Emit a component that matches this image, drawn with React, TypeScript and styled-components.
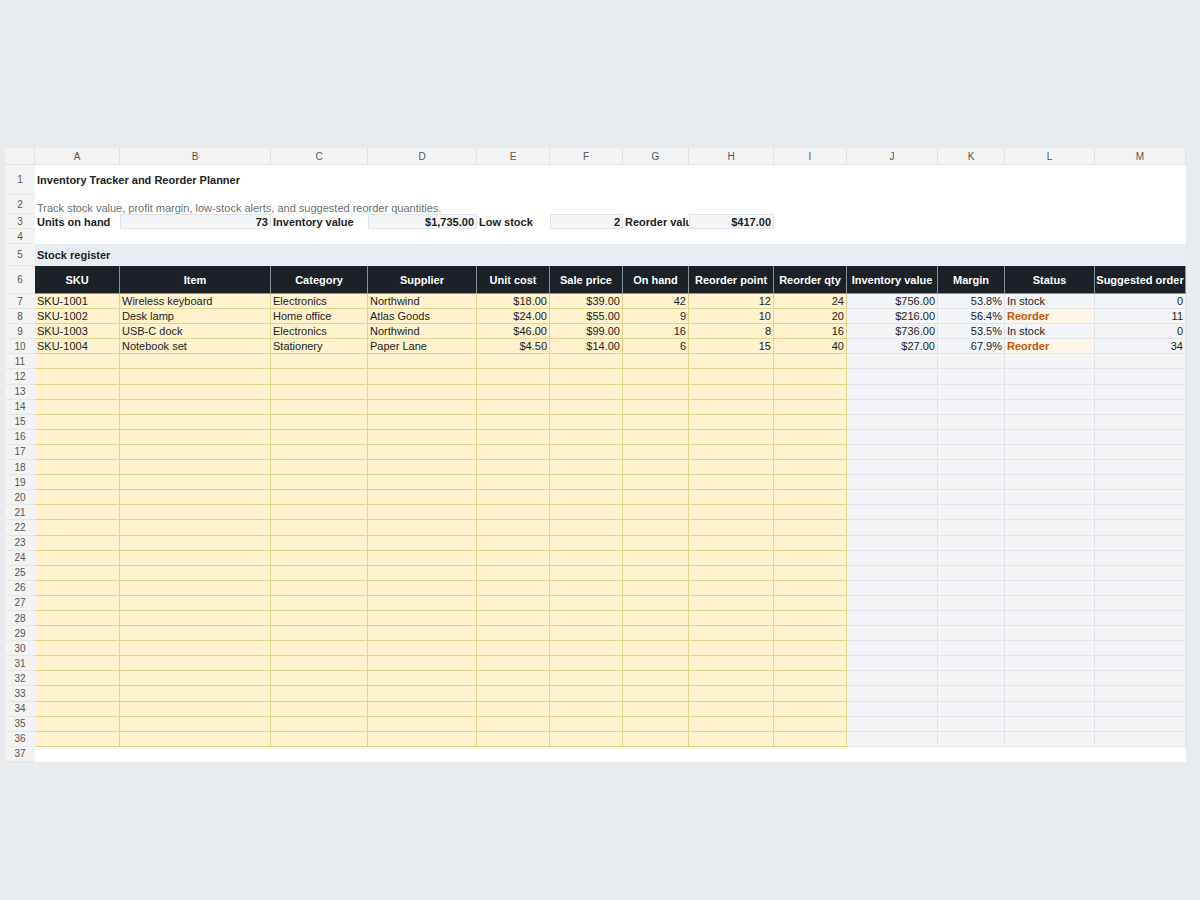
import React from "react";
import styled, { createGlobalStyle, css } from "styled-components";

const Global = createGlobalStyle`
  html, body { margin: 0; background: #e8ecef; font-family: "Liberation Sans", Arial, sans-serif; }
`;

const cols = [85, 151, 97, 109, 73, 73, 66, 85, 73, 91, 67, 90, 91];
const letters = "ABCDEFGHIJKLM".split("");
const rowHeights: Record<number, number> = { 1: 30, 2: 19, 3: 15, 4: 15, 5: 22, 6: 28 };

const Page = styled.div`
  padding: 148px 0 0 5px;
  height: 900px;
  box-sizing: border-box;
`;
const Sheet = styled.div`
  display: grid;
  grid-template-columns: 30px ${cols.map((c) => c + "px").join(" ")};
  width: max-content;
  background: #fff;
  font-size: 11px;
  color: #222;
`;
const ColHead = styled.div`
  height: 17px;
  background: #f3f3f3;
  border-right: 1px solid #e2e2e2;
  border-bottom: 1px solid #e2e2e2;
  box-sizing: border-box;
  font-size: 10px;
  color: #555;
  display: flex;
  align-items: center;
  justify-content: center;
`;
const RowHead = styled.div<{ $h: number }>`
  height: ${(p) => p.$h}px;
  background: #f3f3f3;
  border-bottom: 1px solid #e6e6e6;
  box-sizing: border-box;
  font-size: 10px;
  color: #555;
  display: flex;
  align-items: center;
  justify-content: center;
`;

type Kind = "plain" | "band" | "head" | "input" | "calc" | "metric" | "warn";
const Cell = styled.div<{ $h: number; $k: Kind; $r?: boolean; $b?: boolean; $span?: number; $end?: boolean }>`
  height: ${(p) => p.$h}px;
  box-sizing: border-box;
  padding: 0 2px;
  white-space: nowrap;
  overflow: ${(p) => (p.$span ? "visible" : "hidden")};
  display: flex;
  align-items: ${(p) => (p.$end ? "flex-end" : "center")};
  justify-content: ${(p) => (p.$r ? "flex-end" : "flex-start")};
  font-weight: ${(p) => (p.$b ? 700 : 400)};
  ${(p) => p.$span && css`grid-column: span ${p.$span};`}
  ${(p) => {
    switch (p.$k) {
      case "band":
        return css`background: #e8edf3;`;
      case "head":
        return css`
          background: #1b2126;
          color: #fff;
          font-weight: 700;
          justify-content: center;
          border-right: 1px solid #8a9096;
          border-bottom: 1px solid #8a9096;
        `;
      case "input":
        return css`
          background: #fff2cc;
          border-right: 1px solid #e7d391;
          border-bottom: 1px solid #e7d391;
        `;
      case "calc":
        return css`
          background: #f3f5f7;
          border-right: 1px solid #e1e5e9;
          border-bottom: 1px solid #e1e5e9;
        `;
      case "metric":
        return css`
          background: #f3f5f7;
          border: 1px solid #e1e5e9;
        `;
      case "warn":
        return css`
          background: #fdf4ea;
          color: #c2560c;
          font-weight: 700;
          border-right: 1px solid #e1e5e9;
          border-bottom: 1px solid #e1e5e9;
        `;
      default:
        return css``;
    }
  }}
`;
const Sub = styled.span`color: #6b7075;`;

const data = [
  ["SKU-1001", "Wireless keyboard", "Electronics", "Northwind", "$18.00", "$39.00", "42", "12", "24", "$756.00", "53.8%", "In stock", "0"],
  ["SKU-1002", "Desk lamp", "Home office", "Atlas Goods", "$24.00", "$55.00", "9", "10", "20", "$216.00", "56.4%", "Reorder", "11"],
  ["SKU-1003", "USB-C dock", "Electronics", "Northwind", "$46.00", "$99.00", "16", "8", "16", "$736.00", "53.5%", "In stock", "0"],
  ["SKU-1004", "Notebook set", "Stationery", "Paper Lane", "$4.50", "$14.00", "6", "15", "40", "$27.00", "67.9%", "Reorder", "34"],
];
const heads = ["SKU", "Item", "Category", "Supplier", "Unit cost", "Sale price", "On hand", "Reorder point", "Reorder qty", "Inventory value", "Margin", "Status", "Suggested order"];
const rightCols = [4, 5, 6, 7, 8, 9, 10, 12];

export default function App() {
  const rows: React.ReactNode[] = [];
  for (let r = 1; r <= 37; r++) {
    const h = rowHeights[r] ?? 15.1;
    const cells: React.ReactNode[] = [<RowHead key="h" $h={h}>{r}</RowHead>];
    if (r === 1) {
      cells.push(<Cell key="a" $h={h} $k="plain" $b $span={13}>Inventory Tracker and Reorder Planner</Cell>);
    } else if (r === 2) {
      cells.push(<Cell key="a" $h={h} $k="plain" $end $span={13}><Sub>Track stock value, profit margin, low-stock alerts, and suggested reorder quantities.</Sub></Cell>);
    } else if (r === 3) {
      cells.push(
        <Cell key="a" $h={h} $k="plain" $b>Units on hand</Cell>,
        <Cell key="b" $h={h} $k="metric" $b $r>73</Cell>,
        <Cell key="c" $h={h} $k="plain" $b>Inventory value</Cell>,
        <Cell key="d" $h={h} $k="metric" $b $r>$1,735.00</Cell>,
        <Cell key="e" $h={h} $k="plain" $b>Low stock</Cell>,
        <Cell key="f" $h={h} $k="metric" $b $r>2</Cell>,
        <Cell key="g" $h={h} $k="plain" $b>Reorder value</Cell>,
        <Cell key="hh" $h={h} $k="metric" $b $r>$417.00</Cell>,
        <Cell key="rest" $h={h} $k="plain" $span={5} />
      );
    } else if (r === 4 || r === 37) {
      cells.push(<Cell key="a" $h={h} $k="plain" $span={13} />);
    } else if (r === 5) {
      cells.push(<Cell key="a" $h={h} $k="band" $b $span={13}>Stock register</Cell>);
    } else if (r === 6) {
      heads.forEach((t, i) => cells.push(<Cell key={i} $h={h} $k="head">{t}</Cell>));
    } else {
      const d = data[r - 7];
      for (let c = 0; c < 13; c++) {
        const v = d ? d[c] : "";
        const kind: Kind = c < 9 ? "input" : v === "Reorder" ? "warn" : "calc";
        cells.push(<Cell key={c} $h={h} $k={kind} $r={rightCols.includes(c)}>{v}</Cell>);
      }
    }
    rows.push(<React.Fragment key={r}>{cells}</React.Fragment>);
  }
  return (
    <Page>
      <Global />
      <Sheet>
        <ColHead />
        {letters.map((l) => <ColHead key={l}>{l}</ColHead>)}
        {rows}
      </Sheet>
    </Page>
  );
}
